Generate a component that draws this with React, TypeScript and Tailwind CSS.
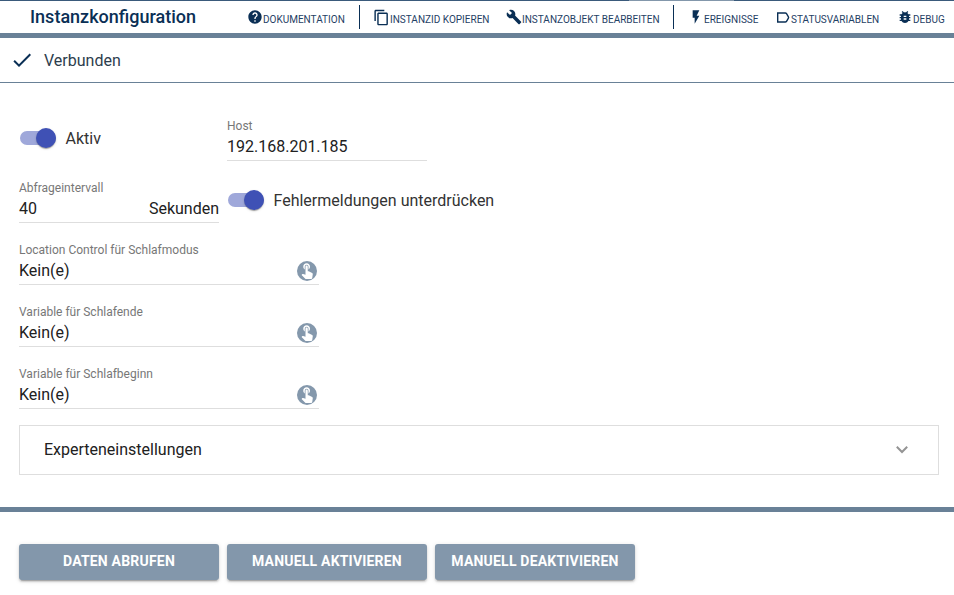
import React from "react";
import {
  MdHelp,
  MdContentCopy,
  MdBuild,
  MdFlashOn,
  MdBugReport,
  MdTouchApp,
  MdCheck,
} from "react-icons/md";

function ToolbarItem({ className, icon, label }: { className: string; icon: React.ReactNode; label: string }) {
  return (
    <button className={`flex h-8 shrink-0 items-center whitespace-nowrap ${className}`}>
      {icon}
      <span className="pt-[5px] text-[10px] leading-4 text-[#1f4165]">{label}</span>
    </button>
  );
}

function Toggle({ label, className }: { label: string; className: string }) {
  return (
    <label className={`flex h-6 items-center ${className}`}>
      <span className="flex h-[14px] w-9 items-center justify-end rounded-full bg-[#9fa8da]">
        <span className="size-5 shrink-0 rounded-full bg-[#3f51b5] shadow-[0_2px_1px_-1px_rgba(0,0,0,0.2),0_1px_1px_rgba(0,0,0,0.14),0_1px_3px_rgba(0,0,0,0.12)]" />
      </span>
      <span className="ml-[9.5px] pt-px text-[16px] leading-6 text-[#333]">{label}</span>
    </label>
  );
}

function Field({ label, className, children }: { label: string; className: string; children: React.ReactNode }) {
  return (
    <div className={`h-[42px] border-b border-[#dedede] ${className}`}>
      <div className="h-[15px] text-[12px] leading-[15px] text-[#777]">{label}</div>
      <div className="flex h-[26px] items-center justify-between text-[16px] leading-6 text-[#212121]">{children}</div>
    </div>
  );
}

function VariableField({ label }: { label: string }) {
  return (
    <Field label={label} className="mb-5 w-[300px]">
      <span>Kein(e)</span>
      <span className="mr-[2px] flex size-5 items-center justify-center rounded-full bg-[#8498ac] pb-[3px]">
        <MdTouchApp className="size-[18px] shrink-0 text-white" />
      </span>
    </Field>
  );
}

function ActionButton({ label }: { label: string }) {
  return (
    <button className="flex h-9 w-[200px] justify-center rounded-[3px] bg-[#8397ab] text-[14px] font-bold leading-[34px] tracking-[0.2px] text-white shadow-[0_3px_1px_-2px_rgba(0,0,0,0.2),0_2px_2px_rgba(0,0,0,0.14),0_1px_5px_rgba(0,0,0,0.12)]">
      {label}
    </button>
  );
}

export default function App() {
  return (
    <div className="flex h-[595px] w-[954px] flex-col overflow-hidden bg-white font-['Roboto',sans-serif]">
      <div className="flex h-px shrink-0 bg-[#3a5a7b]">
        <div className="ml-[629px] w-[105px] bg-[#8397ab]" />
      </div>
      <header className="flex h-[37px] shrink-0 border-b-[5px] border-[#698197] text-[#0a2f55]">
        <h1 className="ml-[30px] w-[217px] shrink-0 text-[18px] font-medium leading-8">Instanzkonfiguration</h1>
        <ToolbarItem className="w-[112px]" icon={<MdHelp className="size-4" />} label="DOKUMENTATION" />
        <div className="mt-1 h-6 w-px shrink-0 bg-[#0a2f55]" />
        <ToolbarItem className="ml-[13px] w-[133px]" icon={<MdContentCopy className="size-[17px]" />} label="INSTANZID KOPIEREN" />
        <ToolbarItem className="w-[167px]" icon={<MdBuild className="size-4" />} label="INSTANZOBJEKT BEARBEITEN" />
        <div className="mt-1 h-6 w-px shrink-0 bg-[#0a2f55]" />
        <ToolbarItem className="ml-[14px] w-[88px]" icon={<MdFlashOn className="size-4" />} label="EREIGNISSE" />
        <ToolbarItem
          className="w-[121px]"
          icon={
            <svg className="mr-px h-[11px] w-[14px]" viewBox="0 0 14 11" fill="none" stroke="currentColor" strokeWidth="1.4">
              <path d="M1.7 1h7.6c.5 0 .8.1 1.1.5l2 3.3c.3.5.3.9 0 1.4l-2 3.3c-.3.4-.6.5-1.1.5H1.7Z" />
            </svg>
          }
          label="STATUSVARIABLEN"
        />
        <ToolbarItem className="" icon={<MdBugReport className="size-4" />} label="DEBUG" />
      </header>
      <section className="flex h-[45px] shrink-0 items-center border-b border-[#698197] text-[#0a2f55]">
        <MdCheck className="ml-[10px] size-6" />
        <span className="ml-[10px] pt-px text-[16px] leading-6 text-[#2d3d4d]">Verbunden</span>
      </section>
      <main className="flex h-[424px] shrink-0 flex-col px-[19px] pt-9">
        <div className="flex h-[62px] shrink-0">
          <Toggle label="Aktiv" className="ml-px mt-[7px] w-[207px]" />
          <Field label="Host" className="w-[200px]"><span>192.168.201.185</span></Field>
        </div>
        <div className="flex h-[62px] shrink-0">
          <Field label="Abfrageintervall" className="w-[200px]">
            <span>40</span>
            <span>Sekunden</span>
          </Field>
          <Toggle label="Fehlermeldungen unterdrücken" className="ml-[9px] mt-[7px]" />
        </div>
        <VariableField label="Location Control für Schlafmodus" />
        <VariableField label="Variable für Schlafende" />
        <VariableField label="Variable für Schlafbeginn" />
        <div className="-mt-1 flex h-[50px] w-[920px] shrink-0 items-center justify-between border border-[#dedede] pl-6 pr-[30px] text-[16px] text-[#212121]">
          <span>Experteneinstellungen</span>
          <svg className="mb-px h-[9px] w-3" viewBox="0 0 12 9" fill="none" stroke="#949494" strokeWidth="2">
            <path d="m.8 1.8 5.2 5.2 5.2-5.2" />
          </svg>
        </div>
      </main>
      <footer className="flex flex-1 gap-2 border-t-[5px] border-[#698197] pl-[19px] pt-8">
        <ActionButton label="DATEN ABRUFEN" />
        <ActionButton label="MANUELL AKTIVIEREN" />
        <ActionButton label="MANUELL DEAKTIVIEREN" />
      </footer>
    </div>
  );
}
